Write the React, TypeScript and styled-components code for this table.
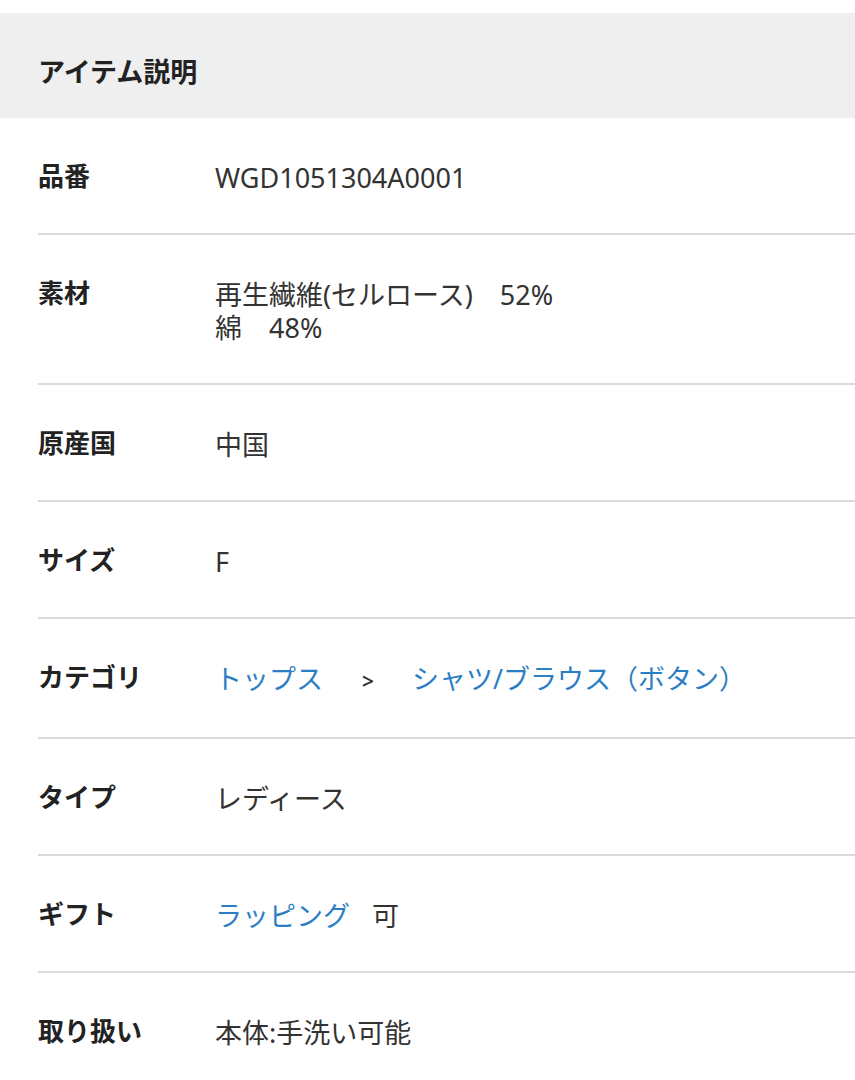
import styled, { createGlobalStyle } from 'styled-components';

const GlobalStyle = createGlobalStyle`
  html, body {
    margin: 0;
    padding: 0;
    background: #fff;
  }
  body {
    font-family: Roboto, "Noto Sans CJK JP", sans-serif;
    color: #222;
  }
`;

const Section = styled.section`
  padding-top: 13px;
`;

const Heading = styled.h2`
  margin: 0;
  height: 105px;
  box-sizing: border-box;
  display: flex;
  align-items: center;
  padding: 9px 38px 0;
  background: #efefef;
  font-size: 27px;
  font-weight: 700;
  color: #222;
`;

const List = styled.dl`
  margin: 0 0 0 38px;
`;

const Row = styled.div<{ $last?: boolean }>`
  display: flex;
  padding: 43px 0 39px;
  border-bottom: ${(p) => (p.$last ? 'none' : '2px solid #dadada')};
`;

const Label = styled.dt`
  width: 177px;
  flex-shrink: 0;
  font-size: 26px;
  line-height: 33px;
  font-weight: 700;
  color: #222;
`;

const Value = styled.dd`
  margin: 0;
  font-family: "Noto Sans", "Noto Sans CJK JP", sans-serif;
  font-size: 27px;
  line-height: 33px;
  color: #333;
`;

const Line = styled.div`
  white-space: nowrap;
`;

const Link = styled.a`
  color: #2b7ec4;
  text-decoration: none;
`;

const Arrow = styled.span`
  display: inline-block;
  margin: 0 38px 0 39px;
  font-size: 21px;
  font-weight: 600;
  color: #333;
`;

const Note = styled.span`
  margin-left: 22px;
`;

export default function App() {
  return (
    <>
      <GlobalStyle />
      <Section>
        <Heading>アイテム説明</Heading>
        <List>
          <Row>
            <Label>品番</Label>
            <Value>WGD1051304A0001</Value>
          </Row>
          <Row>
            <Label>素材</Label>
            <Value>
              <Line>再生繊維(セルロース)　52%</Line>
              <Line>綿　48%</Line>
            </Value>
          </Row>
          <Row>
            <Label>原産国</Label>
            <Value>中国</Value>
          </Row>
          <Row>
            <Label>サイズ</Label>
            <Value>F</Value>
          </Row>
          <Row>
            <Label>カテゴリ</Label>
            <Value>
              <Link href="#">トップス</Link>
              <Arrow>&gt;</Arrow>
              <Link href="#">シャツ/ブラウス（ボタン）</Link>
            </Value>
          </Row>
          <Row>
            <Label>タイプ</Label>
            <Value>レディース</Value>
          </Row>
          <Row>
            <Label>ギフト</Label>
            <Value>
              <Link href="#">ラッピング</Link>
              <Note>可</Note>
            </Value>
          </Row>
          <Row $last>
            <Label>取り扱い</Label>
            <Value>本体:手洗い可能</Value>
          </Row>
        </List>
      </Section>
    </>
  );
}
